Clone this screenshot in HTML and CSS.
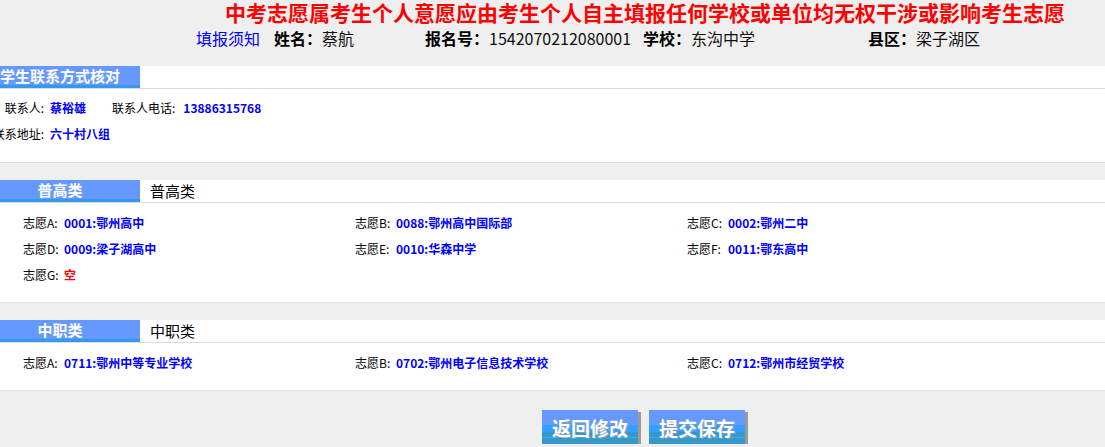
FILE: index.html
```html
<!DOCTYPE html>
<html lang="zh-CN">
<head>
    <meta charset="UTF-8">
    <title>志愿确认</title>
    <link rel="stylesheet" href="styles.css">
</head>
<body>
    <div class="top">
        <div class="notice">中考志愿属考生个人意愿应由考生个人自主填报任何学校或单位均无权干涉或影响考生志愿</div>
        <div class="info">
            <a class="info-cell help" href="#">填报须知</a>
            <span class="info-cell name"><b>姓名：</b>蔡航</span>
            <span class="info-cell reg"><b>报名号：</b>1542070212080001</span>
            <span class="info-cell school"><b>学校：</b>东沟中学</span>
            <span class="info-cell"><b>县区：</b>梁子湖区</span>
        </div>
    </div>

    <div class="panel">
        <div class="panel-head">
            <span class="tab">学生联系方式核对</span>
        </div>
        <div class="panel-body contact">
            <div class="contact-row">
                <span class="c-label">联系人:</span>
                <span class="val">蔡裕雄</span>
                <span class="c-label2">联系人电话:</span>
                <span class="val">13886315768</span>
            </div>
            <div class="contact-row">
                <span class="c-label">联系地址:</span>
                <span class="val">六十村八组</span>
            </div>
        </div>
    </div>

    <div class="panel">
        <div class="panel-head">
            <span class="tab">普高类</span>
            <span class="tab-sub">普高类</span>
        </div>
        <div class="panel-body choices">
            <div class="choice"><span class="ch-label">志愿A:</span><span class="val">0001:鄂州高中</span></div>
            <div class="choice"><span class="ch-label">志愿B:</span><span class="val">0088:鄂州高中国际部</span></div>
            <div class="choice"><span class="ch-label">志愿C:</span><span class="val">0002:鄂州二中</span></div>
            <div class="choice"><span class="ch-label">志愿D:</span><span class="val">0009:梁子湖高中</span></div>
            <div class="choice"><span class="ch-label">志愿E:</span><span class="val">0010:华森中学</span></div>
            <div class="choice"><span class="ch-label">志愿F:</span><span class="val">0011:鄂东高中</span></div>
            <div class="choice"><span class="ch-label">志愿G:</span><span class="val empty">空</span></div>
        </div>
    </div>

    <div class="panel">
        <div class="panel-head">
            <span class="tab">中职类</span>
            <span class="tab-sub">中职类</span>
        </div>
        <div class="panel-body choices">
            <div class="choice"><span class="ch-label">志愿A:</span><span class="val">0711:鄂州中等专业学校</span></div>
            <div class="choice"><span class="ch-label">志愿B:</span><span class="val">0702:鄂州电子信息技术学校</span></div>
            <div class="choice"><span class="ch-label">志愿C:</span><span class="val">0712:鄂州市经贸学校</span></div>
        </div>
    </div>

    <div class="actions">
        <button class="btn">返回修改</button>
        <button class="btn">提交保存</button>
    </div>
</body>
</html>
```

FILE: styles.css
```css
body {
    margin: 0;
    background-color: #efefef;
    font-family: "Noto Sans CJK SC", sans-serif;
    font-size: 12px;
    color: #000;
    overflow: hidden;
}

.top {
    height: 66px;
}

.notice {
    padding-left: 225px;
    font-size: 21px;
    line-height: 24px;
    font-weight: bold;
    color: #ff0000;
    white-space: nowrap;
}

.info {
    display: flex;
    margin-top: 3px;
    padding-left: 196px;
    font-size: 16px;
    line-height: 22px;
    white-space: nowrap;
    color: #111;
}

.info b {
    color: #000;
}

.info-cell.help {
    width: 78px;
    color: #0000ff;
    text-decoration: none;
}

.info-cell.name {
    width: 151px;
}

.info-cell.reg {
    width: 218px;
}

.info-cell.school {
    width: 225px;
}

.panel {
    background-color: #fff;
    border-bottom: 1px solid #dcdcdc;
    margin-bottom: 17px;
}

.panel-head {
    display: flex;
    height: 22px;
    border-bottom: 1px solid #dcdcdc;
}

.tab {
    flex-shrink: 0;
    width: 160px;
    margin-left: -20px;
    height: 19px;
    line-height: 19px;
    background-color: #6699ff;
    border-bottom: 3px solid #3399ee;
    color: #fff;
    font-size: 15px;
    font-weight: bold;
    text-align: center;
    white-space: nowrap;
}

.tab-sub {
    padding-left: 10px;
    font-size: 15px;
    line-height: 21px;
}

.panel-body {
    padding: 7px 0 14px;
}

.contact {
    padding: 6px 0 15px;
}

.contact-row {
    display: flex;
    height: 26px;
    line-height: 26px;
    white-space: nowrap;
}

.c-label {
    display: flex;
    justify-content: flex-end;
    flex-shrink: 0;
    box-sizing: border-box;
    width: 47px;
    padding-right: 3px;
    margin-right: 3px;
}

.c-label2 {
    margin-left: 26px;
    margin-right: 8px;
}

.val {
    color: #0000ff;
    font-weight: bold;
}

.val.empty {
    color: #ff0000;
}

.choices {
    display: grid;
    grid-template-columns: 332px 332px 332px;
    padding-left: 23px;
}

.choice {
    height: 26px;
    line-height: 26px;
    white-space: nowrap;
}

.ch-label {
    display: inline-block;
    width: 41px;
}

.actions {
    display: flex;
    gap: 11px;
    padding-left: 542px;
    margin-top: 19px;
}

.btn {
    width: 96px;
    height: 34px;
    padding: 0;
    border: none;
    background: linear-gradient(#6699ff 0, #6699ff 15px, #33a0ff 15px, #33a0ff 22px, #3399cc 22px, #3399cc 27px, #44aadd 27px, #44aadd 28px, #3399cc 28px);
    box-shadow: 3px 2px 0 #9a9a9a;
    color: #fff;
    font-family: "Noto Sans CJK SC", sans-serif;
    font-size: 19px;
    font-weight: bold;
    text-shadow: 1px 1px 0 #8899aa;
    cursor: pointer;
}
```
